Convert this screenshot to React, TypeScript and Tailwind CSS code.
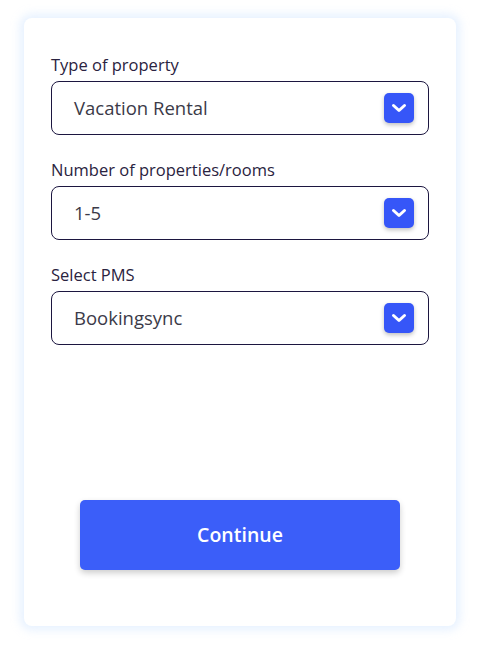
import { useState } from "react";

const fields = [
  { label: "Type of property", value: "Vacation Rental" },
  { label: "Number of properties/rooms", value: "1-5" },
  { label: "Select PMS", value: "Bookingsync" },
];

function Chevron() {
  return (
    <div className="flex h-[30px] w-[30px] items-center justify-center rounded-[5px] bg-[#3656f8] shadow-[0_2px_4px_rgba(0,0,0,0.25)]">
      <svg width="16" height="10" viewBox="0 0 16 10" fill="none">
        <path
          d="M2.5 2.5L8 7.5L13.5 2.5"
          stroke="white"
          strokeWidth="3"
          strokeLinecap="round"
          strokeLinejoin="round"
        />
      </svg>
    </div>
  );
}

export default function App() {
  const [values] = useState(fields);

  return (
    <div className="min-h-[645px] w-full bg-white pt-[18px] font-['Open_Sans',sans-serif]">
      <div className="ml-[24px] flex h-[608px] w-[432px] flex-col rounded-[8px] bg-white px-[27px] pt-[36px] shadow-[0_0_10px_4px_rgba(220,235,255,0.7)]">
        <div className="flex flex-col gap-[24px]">
          {values.map((f) => (
            <div key={f.label} className="flex flex-col">
              <p className="mb-[5px] text-[16.5px] leading-[22px] text-[#2a2340]">
                {f.label}
              </p>
              <div className="flex h-[54px] items-center justify-between rounded-[8px] border border-[#1c1640] pl-[22px] pr-[14px]">
                <span className="text-[18.5px] text-[#3b3a48]">{f.value}</span>
                <Chevron />
              </div>
            </div>
          ))}
        </div>

        <div className="mt-auto mb-[56px] flex justify-center">
          <button className="h-[70px] w-[320px] rounded-[5px] bg-[#3b5ef9] text-[19.5px] font-semibold text-white shadow-[0_3px_6px_rgba(0,0,0,0.2)]">
            Continue
          </button>
        </div>
      </div>
    </div>
  );
}
